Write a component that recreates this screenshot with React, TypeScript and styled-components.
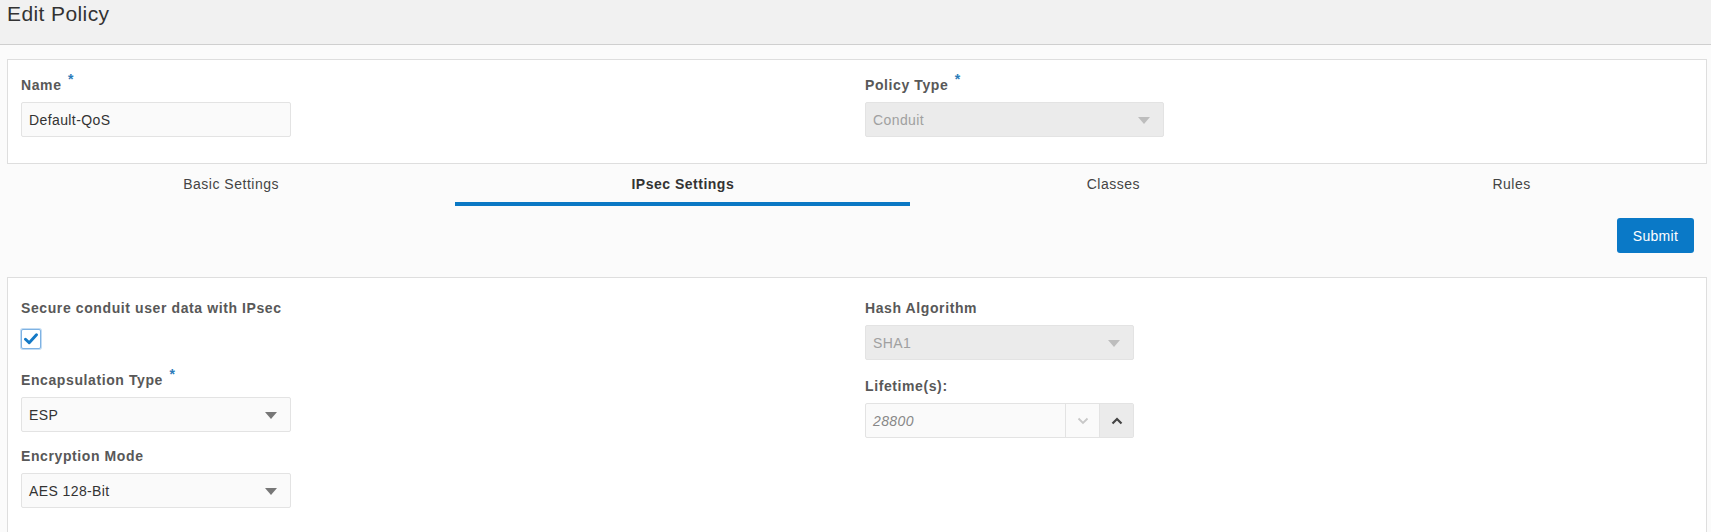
import React from 'react';
import styled, { createGlobalStyle } from 'styled-components';

const GlobalStyle = createGlobalStyle`
  html, body {
    margin: 0;
    padding: 0;
    background: #fbfbfb;
    font-family: 'Liberation Sans', Arial, sans-serif;
    color: #333;
  }
  * {
    box-sizing: border-box;
  }
`;

export default function App() {
  return (
    <>
      <GlobalStyle />
      <Header>
        <Title>Edit Policy</Title>
      </Header>
      <Content>
        <Panel $top={16} $bottom={26}>
          <Column>
            <Label>
              Name <Star>*</Star>
            </Label>
            <TextInput $width={270}>Default-QoS</TextInput>
          </Column>
          <Column>
            <Label>
              Policy Type <Star>*</Star>
            </Label>
            <Select $width={299} $disabled>
              Conduit
              <Caret $disabled />
            </Select>
          </Column>
        </Panel>

        <Tabs>
          <Tab>Basic Settings</Tab>
          <Tab $active>IPsec Settings</Tab>
          <Tab>Classes</Tab>
          <Tab>Rules</Tab>
        </Tabs>

        <Actions>
          <SubmitButton>Submit</SubmitButton>
        </Actions>

        <Panel $top={21} $bottom={40}>
          <Column>
            <Label>Secure conduit user data with IPsec</Label>
            <Checkbox>
              <svg width="14" height="12" viewBox="0 0 14 12">
                <path
                  d="M1.5 6.2 L5.2 9.8 L12.5 1.8"
                  fill="none"
                  stroke="#1479c6"
                  strokeWidth="2.9"
                  strokeLinecap="round"
                  strokeLinejoin="round"
                />
              </svg>
            </Checkbox>
            <Field $gap={22}>
              <Label>
                Encapsulation Type <Star>*</Star>
              </Label>
              <Select $width={270}>
                ESP
                <Caret />
              </Select>
            </Field>
            <Field $gap={15}>
              <Label>Encryption Mode</Label>
              <Select $width={270}>
                AES 128-Bit
                <Caret />
              </Select>
            </Field>
          </Column>
          <Column>
            <Label>Hash Algorithm</Label>
            <Select $width={269} $disabled>
              SHA1
              <Caret $disabled />
            </Select>
            <Field $gap={17}>
              <Label>Lifetime(s):</Label>
              <NumberBox>
                <NumberValue>28800</NumberValue>
                <SpinButton>
                  <svg width="12" height="8" viewBox="0 0 12 8">
                    <path d="M1.5 1.5 L6 6 L10.5 1.5" fill="none" stroke="#c8c8c8" strokeWidth="1.8" />
                  </svg>
                </SpinButton>
                <SpinButton $active>
                  <svg width="12" height="8" viewBox="0 0 12 8">
                    <path d="M1.5 6.5 L6 2 L10.5 6.5" fill="none" stroke="#444" strokeWidth="2.2" />
                  </svg>
                </SpinButton>
              </NumberBox>
            </Field>
          </Column>
        </Panel>
      </Content>
    </>
  );
}

const Header = styled.div`
  height: 45px;
  background: #f1f1f1;
  border-bottom: 1px solid #cfcfcf;
  padding: 1px 7px 0;
`;

const Title = styled.h1`
  margin: 0;
  font-size: 21px;
  font-weight: normal;
  letter-spacing: 0.4px;
  line-height: 26px;
  color: #333;
`;

const Content = styled.div`
  padding: 14px 4px 0 7px;
`;

const Panel = styled.div<{ $top: number; $bottom: number }>`
  display: flex;
  background: #fff;
  border: 1px solid #dedede;
  padding: ${(p) => p.$top}px 10px ${(p) => p.$bottom}px 0;
`;

const Column = styled.div`
  flex: 1 1 0;
  padding-left: 13px;
  display: flex;
  flex-direction: column;
  align-items: flex-start;
`;

const Field = styled.div<{ $gap: number }>`
  margin-top: ${(p) => p.$gap}px;
  display: flex;
  flex-direction: column;
  align-items: flex-start;
`;

const Label = styled.label`
  display: block;
  font-size: 14px;
  font-weight: bold;
  line-height: 18px;
  color: #585858;
  letter-spacing: 0.6px;
  margin-bottom: 8px;
  white-space: nowrap;
`;

const Star = styled.span`
  position: relative;
  top: -6px;
  color: #2b7bb9;
  font-size: 14px;
  font-weight: bold;
  margin-left: 2px;
`;

const TextInput = styled.div<{ $width: number }>`
  width: ${(p) => p.$width}px;
  height: 35px;
  border: 1px solid #e3e3e3;
  border-radius: 2px;
  background: #fafafa;
  font-size: 14px;
  letter-spacing: 0.4px;
  color: #333;
  padding: 0 7px;
  display: flex;
  align-items: center;
`;

const Select = styled(TextInput)<{ $disabled?: boolean }>`
  position: relative;
  background: ${(p) => (p.$disabled ? '#ebebeb' : '#fafafa')};
  color: ${(p) => (p.$disabled ? '#a0a0a0' : '#333')};
`;

const Caret = styled.span<{ $disabled?: boolean }>`
  position: absolute;
  right: 13px;
  top: 50%;
  margin-top: -3px;
  width: 0;
  height: 0;
  border-left: 6px solid transparent;
  border-right: 6px solid transparent;
  border-top: 7px solid ${(p) => (p.$disabled ? '#bdbdbd' : '#777')};
`;

const Tabs = styled.div`
  display: flex;
`;

const Tab = styled.div<{ $active?: boolean }>`
  flex: 1 1 auto;
  text-align: center;
  font-size: 14px;
  line-height: 18px;
  padding: 11px 0 9px;
  letter-spacing: 0.5px;
  color: ${(p) => (p.$active ? '#333' : '#444')};
  font-weight: ${(p) => (p.$active ? 'bold' : 'normal')};
  border-bottom: 4px solid ${(p) => (p.$active ? '#0a78c4' : 'transparent')};
`;

const Actions = styled.div`
  display: flex;
  justify-content: flex-end;
  padding: 12px 13px 24px 0;
`;

const SubmitButton = styled.button`
  height: 35px;
  width: 77px;
  border: none;
  border-radius: 3px;
  background: #0a79c7;
  color: #fff;
  font-family: 'Liberation Sans', Arial, sans-serif;
  font-size: 14px;
  letter-spacing: 0.3px;
  padding: 0;
`;

const Checkbox = styled.span`
  width: 20px;
  height: 20px;
  margin-top: 4px;
  border: 1px solid #7eb2e3;
  box-shadow: 0 0 0 1px #c3dcf3;
  border-radius: 2px;
  background: #fff;
  display: flex;
  align-items: center;
  justify-content: center;
`;

const NumberBox = styled.div`
  width: 269px;
  height: 35px;
  border: 1px solid #e3e3e3;
  border-radius: 2px;
  background: #fafafa;
  display: flex;
`;

const NumberValue = styled.div`
  flex: 1;
  font-size: 14px;
  font-style: italic;
  letter-spacing: 0.4px;
  color: #888;
  padding: 0 7px;
  display: flex;
  align-items: center;
`;

const SpinButton = styled.div<{ $active?: boolean }>`
  width: 34px;
  border-left: 1px solid #e3e3e3;
  background: ${(p) => (p.$active ? '#ebebeb' : 'transparent')};
  display: flex;
  align-items: center;
  justify-content: center;
`;
